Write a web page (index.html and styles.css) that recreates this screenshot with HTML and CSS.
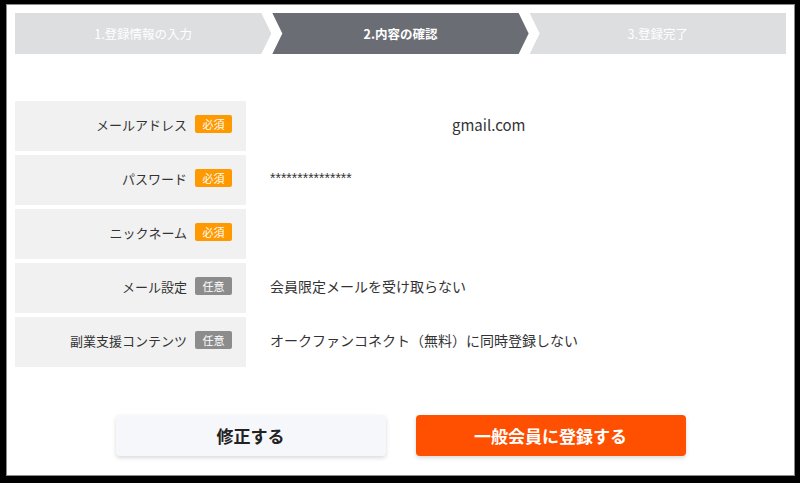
FILE: index.html
```html
<!DOCTYPE html>
<html lang="ja">
<head>
    <meta charset="UTF-8">
    <meta name="viewport" content="width=device-width, initial-scale=1.0">
    <title>内容の確認</title>
    <link rel="stylesheet" href="styles.css">
</head>
<body>
    <div class="container">
        <div class="steps">
            <div class="step step-first">1.登録情報の入力</div>
            <div class="step step-mid active">2.内容の確認</div>
            <div class="step step-last">3.登録完了</div>
        </div>

        <div class="confirm">
            <div class="row">
                <div class="label">メールアドレス<span class="badge required">必須</span></div>
                <div class="value"><span class="email">gmail.com</span></div>
            </div>
            <div class="row">
                <div class="label">パスワード<span class="badge required">必須</span></div>
                <div class="value stars">***************</div>
            </div>
            <div class="row">
                <div class="label">ニックネーム<span class="badge required">必須</span></div>
                <div class="value"></div>
            </div>
            <div class="row">
                <div class="label">メール設定<span class="badge optional">任意</span></div>
                <div class="value">会員限定メールを受け取らない</div>
            </div>
            <div class="row">
                <div class="label">副業支援コンテンツ<span class="badge optional">任意</span></div>
                <div class="value">オークファンコネクト（無料）に同時登録しない</div>
            </div>
        </div>

        <div class="buttons">
            <button class="btn btn-back">修正する</button>
            <button class="btn btn-submit">一般会員に登録する</button>
        </div>
    </div>
</body>
</html>
```

FILE: styles.css
```css
html, body {
    height: 100%;
}
body {
    margin: 0;
    padding: 4px 5px 7px 6px;
    box-sizing: border-box;
    background-color: #000;
    font-family: 'Noto Sans CJK JP', 'Noto Sans', sans-serif;
    color: #333;
}
.container {
    background: white;
    border: 1px solid #8a8a8a;
    height: 100%;
    box-sizing: border-box;
    padding: 8px 8px 0 8px;
}
.steps {
    display: flex;
    gap: 1px;
    height: 41px;
}
.step {
    flex: 1;
    display: flex;
    justify-content: center;
    align-items: center;
    background-color: #dddee0;
    color: #fff;
    font-size: 12.5px;
}
.step-first {
    clip-path: polygon(0 0, calc(100% - 10px) 0, 100% 50%, calc(100% - 10px) 100%, 0 100%);
}
.step-mid {
    clip-path: polygon(0 0, calc(100% - 10px) 0, 100% 50%, calc(100% - 10px) 100%, 0 100%, 10px 50%);
}
.step-last {
    clip-path: polygon(0 0, 100% 0, 100% 100%, 0 100%, 10px 50%);
}
.step.active {
    background-color: #6b6d74;
    font-weight: bold;
}
.confirm {
    margin-top: 47px;
}
.row {
    display: flex;
    height: 50px;
    margin-bottom: 4px;
}
.label {
    width: 231px;
    flex-shrink: 0;
    background-color: #f1f1f1;
    display: flex;
    justify-content: flex-end;
    align-items: center;
    padding: 0 14px 4px 0;
    box-sizing: border-box;
    font-size: 13px;
    color: #333;
}
.badge {
    display: inline-block;
    width: 37px;
    height: 18px;
    line-height: 18px;
    margin-left: 8px;
    border-radius: 2px;
    text-align: center;
    font-size: 11px;
    color: #fff;
}
.required {
    background-color: #ff9900;
}
.optional {
    background-color: #8c8c8c;
}
.value {
    display: flex;
    align-items: center;
    padding: 0 0 4px 24px;
    font-size: 14px;
    color: #333;
}
.email {
    margin-left: 182px;
    font-size: 15px;
}
.stars {
    font-family: 'Liberation Sans', sans-serif;
    font-size: 14px;
}
.buttons {
    display: flex;
    justify-content: center;
    gap: 30px;
    margin-top: 48px;
}
.btn {
    width: 270px;
    height: 41px;
    border: none;
    border-radius: 4px;
    font-family: inherit;
    font-size: 17px;
    font-weight: bold;
    cursor: pointer;
    box-shadow: 0 2px 4px rgba(0, 0, 0, 0.15);
}
.btn-back {
    background-color: #f6f7fb;
    color: #222;
}
.btn-submit {
    background-color: #ff4f00;
    color: #fff;
}
```
